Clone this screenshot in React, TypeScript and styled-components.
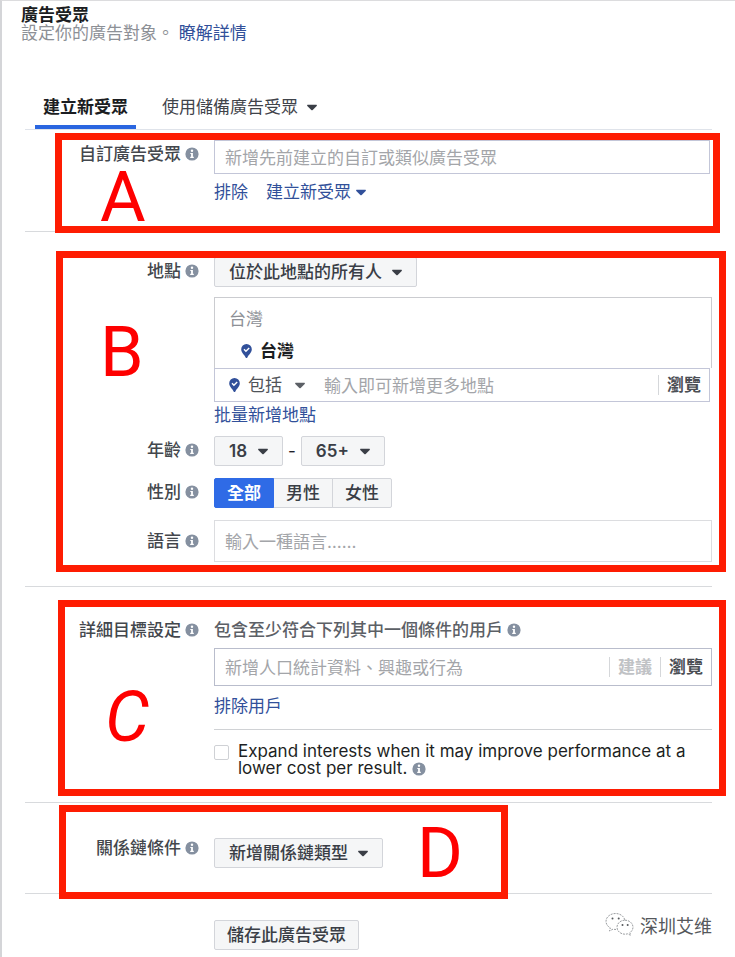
import React from "react";
import styled, { createGlobalStyle, css } from "styled-components";

const GlobalStyle = createGlobalStyle`
  *, *::before, *::after { box-sizing: border-box; }
  body {
    margin: 0;
    background: #fff;
    color: #1d2129;
    font: 400 17px/18px Inter, "Noto Sans CJK TC", sans-serif;
  }
  button, input, select { font: inherit; color: inherit; margin: 0; }
`;

const Page = styled.main`
  min-height: 957px;
  padding: 5px 23px 7px 19px;
  border-left: 2px solid #d4d5d8;
  border-top: 1px solid #dcdcde;
  overflow: hidden;
`;

const Title = styled.h1`
  margin: 0;
  font-size: 17px;
  line-height: 18px;
  font-weight: 700;
  color: #1b1d22;
`;

const Intro = styled.p`
  margin: 0;
  line-height: 18px;
  color: #8d9096;
`;

const Link = styled.a`
  color: #31509a;
  text-decoration: none;
`;

const BulkLink = styled(Link)`
  margin-top: 4px;
`;

const Body = styled.div`
  padding-left: 4px;
`;

const Tabs = styled.div`
  display: flex;
  gap: 18px;
  margin-top: 41px;
  padding-left: 10px;
  border-bottom: 1px solid #dfe3ea;
`;

const Tab = styled.button<{ $active?: boolean }>`
  display: flex;
  align-items: center;
  gap: 8px;
  height: 46px;
  padding: 6px 8px 0;
  border: 0;
  border-bottom: 4px solid ${(p) => (p.$active ? "#2a66e0" : "transparent")};
  background: none;
  white-space: nowrap;
  color: ${(p) => (p.$active ? "#1b1d22" : "#3f434a")};
  font-weight: ${(p) => (p.$active ? 700 : 400)};
`;

const Section = styled.section<{ $pad: string }>`
  position: relative;
  display: grid;
  gap: 12px;
  padding: ${(p) => p.$pad};
  border-bottom: 1px solid #d8dadd;
`;

const Frame = styled.div<{ $inset: string; $width?: string }>`
  position: absolute;
  inset: ${(p) => p.$inset};
  width: ${(p) => p.$width ?? "auto"};
  border: 7px solid #fe1c02;
  pointer-events: none;
`;

const Mark = styled.span<{ $slant?: boolean; $left: number; $top: number }>`
  position: absolute;
  left: ${(p) => p.$left}px;
  top: ${(p) => p.$top}px;
  font: 400 70px/70px Roboto, sans-serif;
  font-style: ${(p) => (p.$slant ? "italic" : "normal")};
  color: #fe0000;
  pointer-events: none;
`;

const Row = styled.div`
  display: grid;
  grid-template-columns: 174px minmax(0, 1fr);
  column-gap: 15px;
  align-items: start;
`;

const Label = styled.div<{ $drop?: number }>`
  display: flex;
  justify-content: flex-end;
  align-items: center;
  gap: 4px;
  padding-top: ${(p) => p.$drop ?? 5}px;
  color: #43474d;
  font-weight: 500;
  white-space: nowrap;
`;

const Stack = styled.div`
  display: flex;
  flex-direction: column;
  min-width: 0;
`;

const InputBox = styled.div<{ $height: number; $tone?: string; $short?: boolean }>`
  display: flex;
  align-items: center;
  height: ${(p) => p.$height}px;
  margin-right: ${(p) => (p.$short ? 2 : 0)}px;
  border: 1px solid ${(p) => p.$tone ?? "#c3c6d8"};
  background: #fff;
`;

const TextInput = styled.input`
  flex: 1;
  min-width: 0;
  height: 28px;
  padding: 2px 10px 0;
  border: 0;
  outline: 0;
  background: none;
  &::placeholder { color: #a3a5a9; opacity: 1; }
`;

const InputAction = styled.button<{ $muted?: boolean }>`
  height: 20px;
  padding: 0 8px;
  border: 0;
  border-left: 1px solid #d5d7da;
  background: none;
  line-height: 18px;
  font-weight: 700;
  white-space: nowrap;
  color: ${(p) => (p.$muted ? "#c0c2c5" : "#4b4e54")};
`;

const Actions = styled.div<{ $loose?: boolean }>`
  display: flex;
  gap: 18px;
  margin-top: ${(p) => (p.$loose ? 11 : 9)}px;
`;

const LinkButton = styled.button`
  display: flex;
  align-items: center;
  gap: 4px;
  padding: 0;
  border: 0;
  background: none;
  color: #31509a;
`;

const controlFace = css`
  height: 30px;
  border: 1px solid #d3d5da;
  border-radius: 2px;
  background: #f5f6f7;
  color: #3a3e46;
  font-weight: 500;
`;

const Picker = styled.span<{ $plain?: boolean }>`
  display: inline-grid;
  align-items: center;
  justify-self: start;
  align-self: ${(p) => (p.$plain ? "center" : "flex-start")};
  & > * { grid-area: 1 / 1; }
  & > svg { justify-self: end; margin-right: ${(p) => (p.$plain ? 0 : 14)}px; pointer-events: none; }
  & > select {
    appearance: none;
    outline: 0;
    ${(p) =>
      p.$plain
        ? css`
            padding: 0 24px 0 0;
            border: 0;
            background: none;
            color: #4f5359;
          `
        : css`
            ${controlFace}
            padding: 0 34px 0 14px;
          `}
  }
`;

const Numbers = styled.div`
  display: flex;
  align-items: center;
  gap: 5px;
  & select { font-weight: 600; }
`;

const Places = styled.div`
  height: 71px;
  margin-top: 10px;
  padding: 12px 14px 0;
  border: 1px solid #cbccd0;
  border-bottom: 0;
`;

const Country = styled.div`
  color: #8d9096;
`;

const Place = styled.div`
  display: flex;
  align-items: center;
  gap: 8px;
  margin-top: 14px;
  padding-left: 12px;
  font-weight: 700;
  color: #1b1d22;
`;

const IncludeBox = styled(InputBox)`
  padding-left: 14px;
  gap: 8px;
`;

const Segments = styled.div`
  display: flex;
`;

const Segment = styled.label`
  ${controlFace}
  display: flex;
  align-items: center;
  justify-content: center;
  width: 60px;
  border-radius: 0;
  & + & { margin-left: -1px; }
  &:last-child { border-radius: 0 2px 2px 0; }
  &:has(:checked) {
    border-color: #2f6be6;
    border-radius: 2px 0 0 2px;
    background: #2f6be6;
    color: #fff;
    font-weight: 700;
    z-index: 1;
  }
  & > input { appearance: none; width: 0; height: 0; margin: 0; }
`;

const Hint = styled.div`
  display: flex;
  align-items: center;
  gap: 4px;
  height: 18px;
  margin-bottom: 9px;
  color: #5c6066;
  font-weight: 500;
  white-space: nowrap;
`;

const Expand = styled.div`
  display: flex;
  gap: 9px;
  margin-top: 14px;
  padding-top: 13px;
  border-top: 1px solid #d0d2d5;
  line-height: 17px;
  color: #1d1f23;
  & svg { vertical-align: -2px; }
`;

const Check = styled.input`
  appearance: none;
  flex: none;
  width: 15px;
  height: 15px;
  margin-top: 2px;
  border: 1px solid #cfd1d5;
  border-radius: 2px;
  background: #fff;
`;

const Footer = styled.footer`
  display: flex;
  justify-content: space-between;
  align-items: flex-start;
  padding: 26px 0 0 189px;
`;

const SaveButton = styled.button`
  ${controlFace}
  padding: 0 12px;
  white-space: nowrap;
`;

const Watermark = styled.div`
  display: flex;
  align-items: center;
  gap: 6px;
  margin-top: -8px;
  font-family: "Noto Sans CJK SC", sans-serif;
  font-size: 18px;
  line-height: 26px;
  color: #55585c;
`;

const Caret = ({ color = "#3a3e46" }: { color?: string }) => (
  <svg width="12" height="7" viewBox="0 0 11 7" aria-hidden="true">
    <path d="M1 .8h9q.8.5.2 1.3L6.200 6q-.7.600-1.400 0L.8 2.100Q.2 1.300 1 .8z" fill={color} />
  </svg>
);

const Info = () => (
  <svg width="14" height="14" viewBox="0 0 14 14" aria-hidden="true">
    <circle cx="7" cy="7" r="6.600" fill="#8590a0" />
    <circle cx="7" cy="3.800" r="1.200" fill="#fff" />
    <path d="M5.300 5.900h2.600v3.900h.9v1.100H5.200V9.800h.9V7h-.8z" fill="#fff" />
  </svg>
);

const Pin = () => (
  <svg width="11" height="14" viewBox="0 0 11 14" aria-hidden="true">
    <path d="M5.500 0A5.300 5.300 0 0 0 .2 5.300C.2 8.700 3.200 10.500 4.600 13.400q.9 1 1.800 0C7.800 10.500 10.800 8.700 10.800 5.300A5.300 5.300 0 0 0 5.500 0z" fill="#31509a" />
    <path d="M3 5.300l1.900 1.900L8.200 3.900" fill="none" stroke="#fff" strokeWidth="1.400" />
  </svg>
);

const ChatLogo = () => (
  <svg width="29" height="26" viewBox="0 0 29 26" fill="none" stroke="#9b9ea1" strokeWidth="1" strokeDasharray="2 1" aria-hidden="true">
    <path d="M11 17.500c-1 0-2-.1-3-.4L4.500 19l.8-3.100C2.500 14.300 1 12 1 9.400 1 4.800 5.500 1.500 10.500 1.500c4.600 0 8.500 2.700 9.200 6.300" />
    <path d="M20 8.200c4.400 0 8 3.100 8 7 0 2.200-1.200 4.200-3.100 5.400l.7 2.700-3-1.500c-.8.300-1.700.4-2.600.4-4.400 0-8-3.100-8-7s3.600-7 8-7z" />
    <g fill="#55585c" stroke="none">
      <circle cx="7.500" cy="6.500" r="1" />
      <circle cx="13.700" cy="6.500" r="1" />
      <circle cx="17.500" cy="13" r="1" />
      <circle cx="22.700" cy="13" r="1" />
    </g>
  </svg>
);

type DropProps = { id: string; label: string; value: string; plain?: boolean; caret?: string };

const Drop = ({ id, label, value, plain, caret }: DropProps) => (
  <Picker $plain={plain}>
    <select id={id} aria-label={label} defaultValue={value}>
      <option>{value}</option>
    </select>
    <Caret color={caret} />
  </Picker>
);

const FieldLabel = ({ text, htmlFor, drop }: { text: string; htmlFor?: string; drop?: number }) => (
  <Label $drop={drop}>
    <label htmlFor={htmlFor}>{text}</label>
    <Info />
  </Label>
);

export default function App() {
  return (
    <>
      <GlobalStyle />
      <Page>
        <Title>廣告受眾</Title>
        <Intro>
          設定你的廣告對象。 <Link href="#learn">瞭解詳情</Link>
        </Intro>
        <Body>
          <Tabs role="tablist">
            <Tab role="tab" aria-selected="true" $active>建立新受眾</Tab>
            <Tab role="tab" aria-selected="false">
              使用儲備廣告受眾 <Caret />
            </Tab>
          </Tabs>

          <Section $pad="10px 0 30px">
            <Row>
              <FieldLabel text="自訂廣告受眾" htmlFor="custom" />
              <Stack>
                <InputBox $height={34} $short>
                  <TextInput id="custom" placeholder="新增先前建立的自訂或類似廣告受眾" />
                </InputBox>
                <Actions>
                  <Link href="#exclude">排除</Link>
                  <LinkButton>建立新受眾 <Caret color="#31509a" /></LinkButton>
                </Actions>
              </Stack>
            </Row>
            <Frame $inset="3px -8px -2px 30px" />
            <Mark $left={75} $top={32}>A</Mark>
          </Section>

          <Section $pad="25px 0 24px">
            <Row>
              <FieldLabel text="地點" htmlFor="scope" />
              <Stack>
                <Drop id="scope" label="地點" value="位於此地點的所有人" />
                <Places>
                  <Country>台灣</Country>
                  <Place><Pin />台灣</Place>
                </Places>
                <IncludeBox $height={34} $short>
                  <Pin />
                  <Drop id="include" label="包括或排除" value="包括" plain caret="#5c6066" />
                  <TextInput aria-label="新增地點" placeholder="輸入即可新增更多地點" />
                  <InputAction>瀏覽</InputAction>
                </IncludeBox>
                <BulkLink href="#bulk">批量新增地點</BulkLink>
              </Stack>
            </Row>
            <Row>
              <FieldLabel text="年齡" htmlFor="age-min" />
              <Numbers>
                <Drop id="age-min" label="最低年齡" value="18" />
                -
                <Drop id="age-max" label="最高年齡" value="65+" />
              </Numbers>
            </Row>
            <Row>
              <FieldLabel text="性別" htmlFor="gender-all" />
              <Segments role="radiogroup" aria-label="性別">
                <Segment><input id="gender-all" type="radio" name="gender" defaultChecked />全部</Segment>
                <Segment><input type="radio" name="gender" />男性</Segment>
                <Segment><input type="radio" name="gender" />女性</Segment>
              </Segments>
            </Row>
            <Row>
              <FieldLabel text="語言" htmlFor="language" drop={12} />
              <InputBox $height={42} $tone="#dcdde0">
                <TextInput id="language" placeholder="輸入一種語言……" />
              </InputBox>
            </Row>
            <Frame $inset="19px -14px 14px 31px" />
            <Mark $left={75} $top={85}>B</Mark>
          </Section>

          <Section $pad="34px 0 25px">
            <Row>
              <FieldLabel text="詳細目標設定" htmlFor="detail" drop={0} />
              <Stack>
                <Hint>包含至少符合下列其中一個條件的用戶 <Info /></Hint>
                <InputBox $height={38} $tone="#b9bdcc">
                  <TextInput id="detail" placeholder="新增人口統計資料、興趣或行為" />
                  <InputAction $muted>建議</InputAction>
                  <InputAction>瀏覽</InputAction>
                </InputBox>
                <Actions $loose>
                  <Link href="#exclude-users">排除用戶</Link>
                </Actions>
                <Expand>
                  <Check id="expand" type="checkbox" />
                  <label htmlFor="expand">
                    Expand interests when it may improve performance at a lower cost per result. <Info />
                  </label>
                </Expand>
              </Stack>
            </Row>
            <Frame $inset="13px -14px 6px 33px" />
            <Mark $slant $left={80} $top={95}>C</Mark>
          </Section>

          <Section $pad="35px 0 25px">
            <Row>
              <FieldLabel text="關係鏈條件" htmlFor="relation" drop={1} />
              <Drop id="relation" label="關係鏈條件" value="新增關係鏈類型" />
            </Row>
            <Frame $inset="2px auto -6px 34px" $width="449px" />
            <Mark $left={392} $top={15}>D</Mark>
          </Section>

          <Footer>
            <SaveButton>儲存此廣告受眾</SaveButton>
            <Watermark lang="zh-Hans"><ChatLogo />深圳艾维</Watermark>
          </Footer>
        </Body>
      </Page>
    </>
  );
}
